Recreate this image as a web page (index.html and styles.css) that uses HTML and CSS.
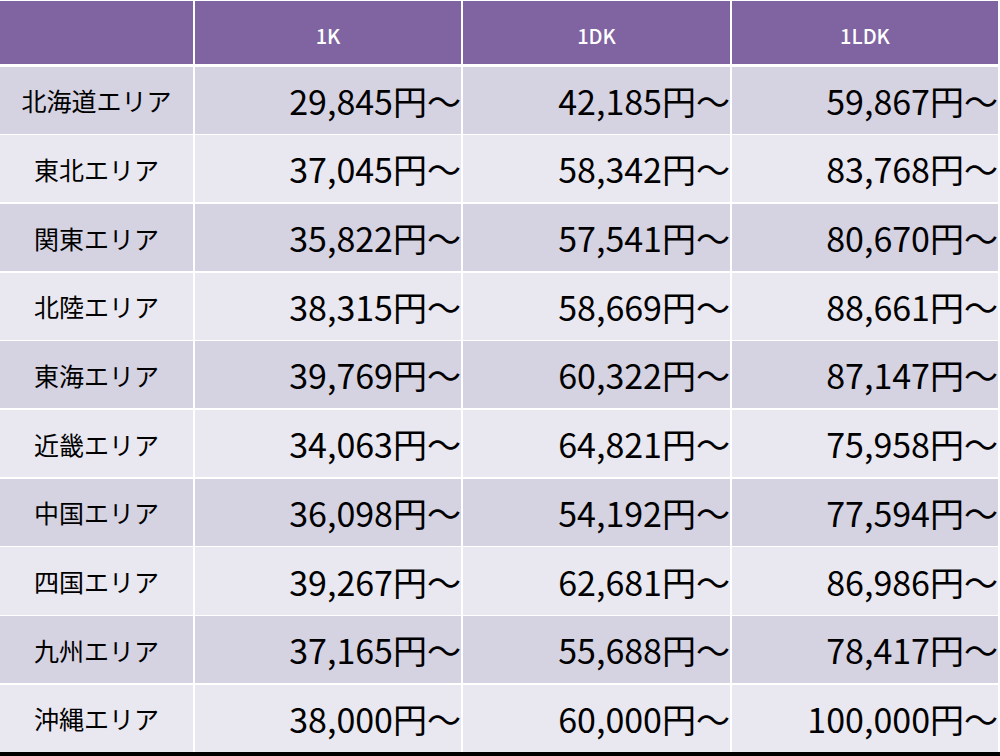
FILE: index.html
```html
<!DOCTYPE html>
<html lang="ja">
<head>
<meta charset="utf-8">
<link rel="stylesheet" href="styles.css">
</head>
<body>
<div class="table">
  <div class="cell head"></div>
  <div class="cell head">1K</div>
  <div class="cell head">1DK</div>
  <div class="cell head">1LDK</div>

  <div class="cell name odd">北海道エリア</div>
  <div class="cell price odd">29,845円〜</div>
  <div class="cell price odd">42,185円〜</div>
  <div class="cell price odd">59,867円〜</div>

  <div class="cell name even">東北エリア</div>
  <div class="cell price even">37,045円〜</div>
  <div class="cell price even">58,342円〜</div>
  <div class="cell price even">83,768円〜</div>

  <div class="cell name odd">関東エリア</div>
  <div class="cell price odd">35,822円〜</div>
  <div class="cell price odd">57,541円〜</div>
  <div class="cell price odd">80,670円〜</div>

  <div class="cell name even">北陸エリア</div>
  <div class="cell price even">38,315円〜</div>
  <div class="cell price even">58,669円〜</div>
  <div class="cell price even">88,661円〜</div>

  <div class="cell name odd">東海エリア</div>
  <div class="cell price odd">39,769円〜</div>
  <div class="cell price odd">60,322円〜</div>
  <div class="cell price odd">87,147円〜</div>

  <div class="cell name even">近畿エリア</div>
  <div class="cell price even">34,063円〜</div>
  <div class="cell price even">64,821円〜</div>
  <div class="cell price even">75,958円〜</div>

  <div class="cell name odd">中国エリア</div>
  <div class="cell price odd">36,098円〜</div>
  <div class="cell price odd">54,192円〜</div>
  <div class="cell price odd">77,594円〜</div>

  <div class="cell name even">四国エリア</div>
  <div class="cell price even">39,267円〜</div>
  <div class="cell price even">62,681円〜</div>
  <div class="cell price even">86,986円〜</div>

  <div class="cell name odd">九州エリア</div>
  <div class="cell price odd">37,165円〜</div>
  <div class="cell price odd">55,688円〜</div>
  <div class="cell price odd">78,417円〜</div>

  <div class="cell name even">沖縄エリア</div>
  <div class="cell price even">38,000円〜</div>
  <div class="cell price even">60,000円〜</div>
  <div class="cell price even">100,000円〜</div>
</div>
</body>
</html>
```
FILE: styles.css
```css
html, body {
  margin: 0;
  padding: 0;
  background: #000;
}
body {
  width: 1000px;
  height: 756px;
  overflow: hidden;
  font-family: "Noto Sans CJK JP", "Noto Sans", sans-serif;
}
.table {
  box-sizing: border-box;
  width: 1000px;
  height: 752px;
  background: #fff;
  padding: 1px 2px 0 0;
  display: grid;
  grid-template-columns: 193px 266px 267px 266px;
  grid-template-rows: 64px repeat(10, 1fr);
  column-gap: 2px;
  row-gap: 1.6px;
}
.cell {
  display: flex;
  align-items: center;
  color: #000;
}
.head {
  background: #8064a2;
  color: #fff;
  font-size: 20px;
  font-weight: 500;
  justify-content: center;
  padding-top: 6px;
  margin-bottom: 1.5px;
}
.odd { background: #d5d2e2; }
.even { background: #e9e7ef; }
.name {
  justify-content: center;
  font-size: 25px;
}
.price {
  justify-content: flex-end;
  font-size: 34px;
}
```
